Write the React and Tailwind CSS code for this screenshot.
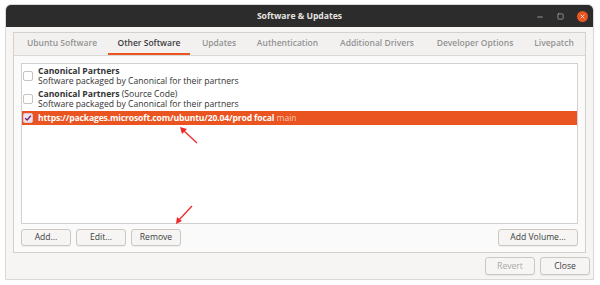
import { Minus, Square, X } from "lucide-react";

const tabs = [
  { label: "Ubuntu Software", w: "w-[92px]" },
  { label: "Other Software", w: "w-[82px]", active: true },
  { label: "Updates", w: "w-[58px]" },
  { label: "Authentication", w: "w-[79px]" },
  { label: "Additional Drivers", w: "w-[100px]" },
  { label: "Developer Options", w: "w-[96px]" },
  { label: "Livepatch", w: "w-[62px]" },
];

const Check = ({ checked }) => (
  <span
    className={
      "flex items-center justify-center w-[10px] h-[10px] rounded-[2px] border shrink-0 " +
      (checked ? "bg-[#efe4ee] border-[#d9c6d7]" : "bg-white border-[#c7c2bd]")
    }
  >
    {checked && (
      <svg width="8" height="8" viewBox="0 0 8 8">
        <path d="M1.2 4.2 L3.2 6 L6.8 1.8" fill="none" stroke="#77216f" strokeWidth="1.4" />
      </svg>
    )}
  </span>
);

const Btn = ({ children, className = "", disabled }) => (
  <button
    className={
      "h-[17px] rounded-[3px] border border-[#cdc7c2] bg-[#f6f5f4] text-[8.6px] leading-none shadow-[0_1px_0_rgba(0,0,0,0.05)] " +
      (disabled ? "text-[#a9a9a9] " : "text-[#3d3d3d] ") +
      className
    }
  >
    {children}
  </button>
);

const App = () => {
  return (
    <div
      className="relative w-[600px] h-[285px] bg-white pt-[4px] pl-[5px]"
      style={{ fontFamily: '"Open Sans", "Noto Sans", sans-serif' }}
    >
      <div className="w-[589px] h-[276px] flex flex-col rounded-t-[6px] border border-[#d8d8d8] overflow-hidden">
        {/* title bar */}
        <div className="relative h-[22px] shrink-0 bg-[#2c2c2c] flex items-center justify-center">
          <span className="text-[8.6px] font-bold text-[#e6e4e0]">Software &amp; Updates</span>
          <div className="absolute right-[5px] top-0 h-full flex items-center gap-[13px]">
            <Minus size={8} strokeWidth={2} className="text-[#c9c9c9] mt-[2px]" />
            <Square size={7} strokeWidth={2} className="text-[#c9c9c9]" />
            <span className="w-[11px] h-[11px] rounded-full bg-[#e95420] flex items-center justify-center">
              <X size={7} strokeWidth={2.5} className="text-white" />
            </span>
          </div>
        </div>

        {/* body */}
        <div className="flex-1 bg-[#f6f5f4] pt-[5px] px-[7px] flex flex-col">
          <div className="h-[221px] border border-[#d5d0cc] bg-[#fafafa] flex flex-col">
            <div className="h-[23px] shrink-0 bg-[#f2f1f0] border-b border-[#dcd8d4] flex pl-[2px]">
              {tabs.map((t) => (
                <div
                  key={t.label}
                  className={
                    t.w +
                    " h-full flex items-center justify-center text-[8.5px] font-semibold border-b-2 " +
                    (t.active ? "border-[#e95420] text-[#3d3d3d] font-bold" : "border-transparent text-[#939393]")
                  }
                >
                  {t.label}
                </div>
              ))}
            </div>

            <div className="flex-1 flex flex-col px-[7px] pt-[7px] pb-[6px] gap-[5px]">
              <div className="flex-1 bg-white border border-[#d5d0cc] text-[8.6px] text-[#333333]">
                <div className="flex items-center gap-[5px] pl-[1px] py-[2px] leading-[10px]">
                  <Check />
                  <div>
                    <div className="font-bold">Canonical Partners</div>
                    <div>Software packaged by Canonical for their partners</div>
                  </div>
                </div>
                <div className="flex items-center gap-[5px] pl-[1px] pt-[1px] pb-[2px] leading-[10px]">
                  <Check />
                  <div>
                    <div>
                      <span className="font-bold">Canonical Partners</span> (Source Code)
                    </div>
                    <div>Software packaged by Canonical for their partners</div>
                  </div>
                </div>
                <div className="h-[14px] flex items-center gap-[5px] pl-[1px] bg-[#e95420] text-white leading-[10px]">
                  <Check checked />
                  <div className="whitespace-nowrap">
                    <span className="font-bold tracking-[-0.15px]">
                      https://packages.microsoft.com/ubuntu/20.04/prod focal
                    </span>{" "}
                    <span className="text-[#f7c8b5]">main</span>
                  </div>
                </div>
              </div>

              <div className="flex gap-[5px]">
                <Btn className="w-[50px]">Add...</Btn>
                <Btn className="w-[50px]">Edit...</Btn>
                <Btn className="w-[50px]">Remove</Btn>
                <Btn className="w-[80px] ml-auto">Add Volume...</Btn>
              </div>
            </div>
          </div>

          <div className="flex justify-end gap-[5px] mt-[4px] -mr-[4px]">
            <Btn className="w-[50px] h-[18px]" disabled>
              Revert
            </Btn>
            <Btn className="w-[50px] h-[18px]">Close</Btn>
          </div>
        </div>
      </div>

      {/* annotation arrows */}
      <svg className="absolute left-0 top-0 pointer-events-none" width="600" height="285">
        <g stroke="#ee2a2a" strokeWidth="1.3" fill="#ee2a2a">
          <line x1="197" y1="143" x2="183" y2="130" />
          <polygon points="180,127 187,129 182,134" stroke="none" />
          <line x1="192" y1="206" x2="178" y2="221" />
          <polygon points="176,224 177,217 182,221" stroke="none" />
        </g>
      </svg>
    </div>
  );
};

export default App;
